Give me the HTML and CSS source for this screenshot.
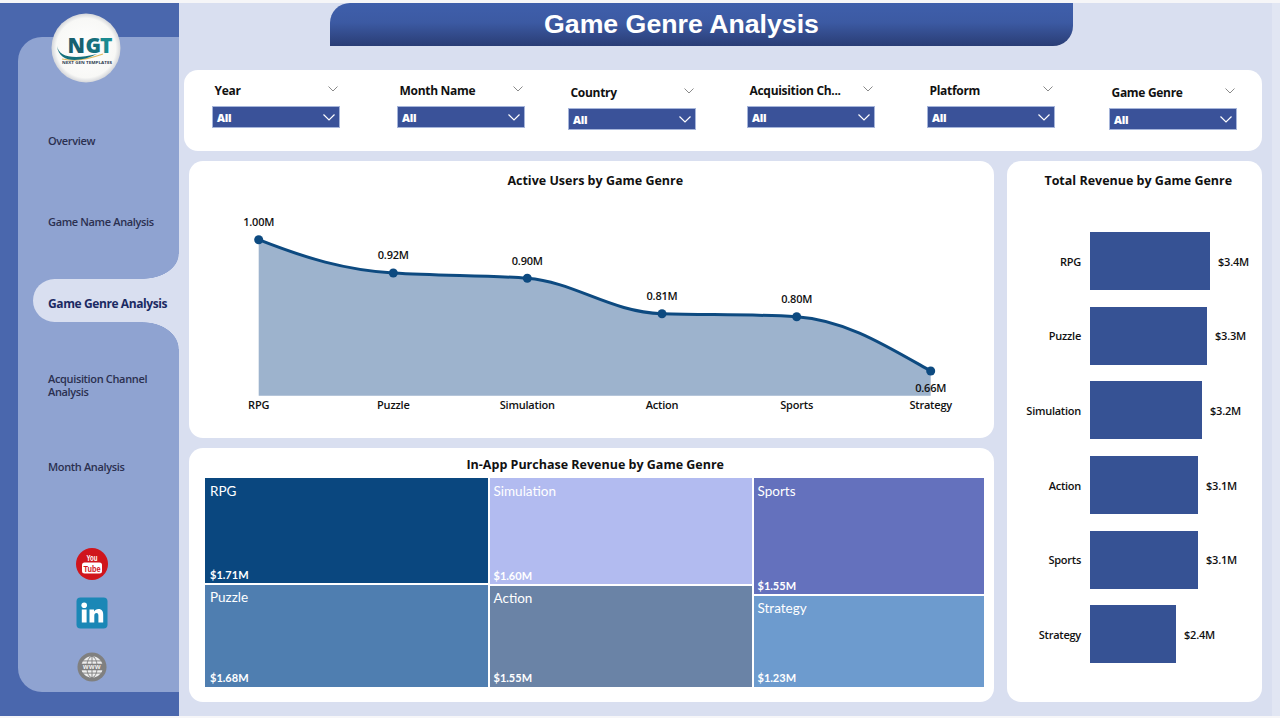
FILE: index.html
```html
<!DOCTYPE html>
<html lang="en">
<head>
<meta charset="utf-8">
<title>Game Genre Analysis</title>
<link rel="stylesheet" href="styles.css">
</head>
<body>
<div class="page">
  <aside class="sidebar">
    <svg class="logo" viewBox="0 0 70 70" width="70" height="70" aria-label="NGT logo">
      <defs>
        <radialGradient id="logoBg" cx="50%" cy="50%" r="50%">
          <stop offset="0" stop-color="#ffffff"/>
          <stop offset="0.86" stop-color="#f8f8f6"/>
          <stop offset="1" stop-color="#d4d6da"/>
        </radialGradient>
      </defs>
      <circle cx="35" cy="35" r="34.5" fill="url(#logoBg)"/>
      <path d="M11 46 C24 49 38 46 52 41" fill="none" stroke="#e2bb5f" stroke-width="1.2"/>
      <path d="M6 33 C8 44 22 47 46 41 C28 50 8 50 6 33Z" fill="#14707c"/>
      <text class="logo-mark" x="16.500" y="40">N</text>
      <text class="logo-mark logo-g" x="34.500" y="40">G</text>
      <text class="logo-mark logo-t" x="49" y="40">T</text>
      <text class="logo-sub" x="36" y="50.500" text-anchor="middle" textLength="50" lengthAdjust="spacingAndGlyphs">NEXT GEN TEMPLATES</text>
    </svg>
    <div class="panel">
      <nav class="nav">
        <a class="nav-item">Overview</a>
        <a class="nav-item raised">Game Name Analysis</a>
        <a class="nav-item active"><span class="curve curve-top"></span><span class="tab"></span><span class="nav-label">Game Genre Analysis</span><span class="curve curve-bottom"></span></a>
        <a class="nav-item">Acquisition Channel<br>Analysis</a>
        <a class="nav-item">Month Analysis</a>
      </nav>
      <div class="social">
        <svg class="icon-yt" viewBox="0 0 32 32" width="32" height="32" aria-label="YouTube">
          <circle cx="16" cy="16" r="16" fill="#d0151c"/>
          <text class="yt-you" x="16" y="13" text-anchor="middle" textLength="11" lengthAdjust="spacingAndGlyphs">You</text>
          <rect x="6" y="14.500" width="20" height="11" rx="2.500" fill="#fff"/>
          <text class="yt-tube" x="16" y="23.500" text-anchor="middle" textLength="17" lengthAdjust="spacingAndGlyphs">Tube</text>
        </svg>
        <svg class="icon-in" viewBox="0 0 32 32" width="32" height="32" aria-label="LinkedIn">
          <rect x="0.500" y="0.500" width="31" height="31" rx="4" fill="#1b87b6"/>
          <circle cx="8.200" cy="8.200" r="2.800" fill="#fff"/>
          <rect x="5.800" y="12.500" width="4.800" height="13" fill="#fff"/>
          <path d="M13.500 12.500h4.500v2c1-1.500 2.500-2.400 4.400-2.400 3.700 0 4.800 2.400 4.800 5.800v7.600h-4.800v-6.900c0-1.700-.5-2.600-1.900-2.600-1.500 0-2.200 1-2.200 2.700v6.800h-4.800z" fill="#fff"/>
        </svg>
        <svg class="icon-web" viewBox="0 0 32 32" width="30" height="30" aria-label="Website">
          <circle cx="16" cy="16" r="15.500" fill="#808080"/>
          <circle cx="16" cy="16" r="11.500" fill="#eeeeee"/>
          <ellipse cx="16" cy="16" rx="5.500" ry="11.500" fill="none" stroke="#808080" stroke-width="1"/>
          <path d="M16 4.500v23M6 9.500h20M6 22.500h20" stroke="#808080" stroke-width="1" fill="none"/>
          <rect x="3" y="12.500" width="26" height="7" fill="#808080"/>
          <text class="web-text" x="16" y="18.500" text-anchor="middle">www</text>
        </svg>
      </div>
    </div>
  </aside>

  <main class="main">
    <header class="banner"><h1 class="banner-title">Game Genre Analysis</h1></header>

    <section class="filters">
      <div class="slicer">
        <div class="slicer-head"><span>Year</span><svg class="chev-small" viewBox="0 0 10 6" width="10" height="6"><path d="M.5.5 5 5 9.500.5"/></svg></div>
        <div class="dropdown"><span>All</span><svg class="chev-white" viewBox="0 0 12 7" width="12" height="7"><path d="M.5.5 6 6 11.500.5"/></svg></div>
      </div>
      <div class="slicer">
        <div class="slicer-head"><span>Month Name</span><svg class="chev-small" viewBox="0 0 10 6" width="10" height="6"><path d="M.5.5 5 5 9.500.5"/></svg></div>
        <div class="dropdown"><span>All</span><svg class="chev-white" viewBox="0 0 12 7" width="12" height="7"><path d="M.5.5 6 6 11.500.5"/></svg></div>
      </div>
      <div class="slicer lowered">
        <div class="slicer-head"><span>Country</span><svg class="chev-small" viewBox="0 0 10 6" width="10" height="6"><path d="M.5.5 5 5 9.500.5"/></svg></div>
        <div class="dropdown"><span>All</span><svg class="chev-white" viewBox="0 0 12 7" width="12" height="7"><path d="M.5.5 6 6 11.500.5"/></svg></div>
      </div>
      <div class="slicer">
        <div class="slicer-head"><span>Acquisition Ch...</span><svg class="chev-small" viewBox="0 0 10 6" width="10" height="6"><path d="M.5.5 5 5 9.500.5"/></svg></div>
        <div class="dropdown"><span>All</span><svg class="chev-white" viewBox="0 0 12 7" width="12" height="7"><path d="M.5.5 6 6 11.500.5"/></svg></div>
      </div>
      <div class="slicer">
        <div class="slicer-head"><span>Platform</span><svg class="chev-small" viewBox="0 0 10 6" width="10" height="6"><path d="M.5.5 5 5 9.500.5"/></svg></div>
        <div class="dropdown"><span>All</span><svg class="chev-white" viewBox="0 0 12 7" width="12" height="7"><path d="M.5.5 6 6 11.500.5"/></svg></div>
      </div>
      <div class="slicer lowered">
        <div class="slicer-head"><span>Game Genre</span><svg class="chev-small" viewBox="0 0 10 6" width="10" height="6"><path d="M.5.5 5 5 9.500.5"/></svg></div>
        <div class="dropdown"><span>All</span><svg class="chev-white" viewBox="0 0 12 7" width="12" height="7"><path d="M.5.5 6 6 11.500.5"/></svg></div>
      </div>
    </section>

    <div class="charts">
      <div class="charts-left">
        <section class="card line-card">
          <h2 class="card-title">Active Users by Game Genre</h2>
          <svg class="line-chart" viewBox="189 190 805 248" width="805" height="248">
            <path class="area" d="M258.700 239.700 C305 258 345 270 393.300 273 C440 276 490 275 527.300 278.300 C575 282 610 312 662 313.700 C710 315 750 314 796.700 316.700 C845 320 885 345 930.700 371 L930.700 395.700 L258.700 395.700Z"/>
            <path class="line" d="M258.700 239.700 C305 258 345 270 393.300 273 C440 276 490 275 527.300 278.300 C575 282 610 312 662 313.700 C710 315 750 314 796.700 316.700 C845 320 885 345 930.700 371"/>
            <circle class="dot" cx="258.700" cy="239.700" r="4.500"/>
            <circle class="dot" cx="393.300" cy="273" r="4.500"/>
            <circle class="dot" cx="527.300" cy="278.300" r="4.500"/>
            <circle class="dot" cx="662" cy="313.700" r="4.500"/>
            <circle class="dot" cx="796.700" cy="316.700" r="4.500"/>
            <circle class="dot" cx="930.700" cy="371" r="4.500"/>
            <text class="chart-label" x="258.700" y="225.500">1.00M</text>
            <text class="chart-label" x="393.300" y="259">0.92M</text>
            <text class="chart-label" x="527.300" y="264.500">0.90M</text>
            <text class="chart-label" x="662" y="300">0.81M</text>
            <text class="chart-label" x="796.700" y="303">0.80M</text>
            <text class="chart-label" x="930.700" y="392">0.66M</text>
            <text class="chart-label" x="258.700" y="409">RPG</text>
            <text class="chart-label" x="393.300" y="409">Puzzle</text>
            <text class="chart-label" x="527.300" y="409">Simulation</text>
            <text class="chart-label" x="662" y="409">Action</text>
            <text class="chart-label" x="796.700" y="409">Sports</text>
            <text class="chart-label" x="930.700" y="409">Strategy</text>
          </svg>
        </section>

        <section class="card tree-card">
          <h2 class="card-title">In-App Purchase Revenue by Game Genre</h2>
          <div class="treemap">
            <div class="tree-col col-a">
              <div class="cell c-rpg h-105"><span class="cell-name">RPG</span><span class="cell-value">$1.71M</span></div>
              <div class="cell c-puzzle"><span class="cell-name">Puzzle</span><span class="cell-value">$1.68M</span></div>
            </div>
            <div class="tree-col col-b">
              <div class="cell c-sim h-106"><span class="cell-name">Simulation</span><span class="cell-value">$1.60M</span></div>
              <div class="cell c-action"><span class="cell-name">Action</span><span class="cell-value">$1.55M</span></div>
            </div>
            <div class="tree-col col-c">
              <div class="cell c-sports h-116"><span class="cell-name">Sports</span><span class="cell-value">$1.55M</span></div>
              <div class="cell c-strategy"><span class="cell-name">Strategy</span><span class="cell-value">$1.23M</span></div>
            </div>
          </div>
        </section>
      </div>

      <section class="card bar-card">
        <h2 class="card-title">Total Revenue by Game Genre</h2>
        <div class="bars">
          <div class="bar-row"><span class="bar-label">RPG</span><div class="bar-track"><div class="bar" style="width:120px"></div><span class="bar-value">$3.4M</span></div></div>
          <div class="bar-row"><span class="bar-label">Puzzle</span><div class="bar-track"><div class="bar" style="width:117px"></div><span class="bar-value">$3.3M</span></div></div>
          <div class="bar-row"><span class="bar-label">Simulation</span><div class="bar-track"><div class="bar" style="width:112px"></div><span class="bar-value">$3.2M</span></div></div>
          <div class="bar-row"><span class="bar-label">Action</span><div class="bar-track"><div class="bar" style="width:108px"></div><span class="bar-value">$3.1M</span></div></div>
          <div class="bar-row"><span class="bar-label">Sports</span><div class="bar-track"><div class="bar" style="width:108px"></div><span class="bar-value">$3.1M</span></div></div>
          <div class="bar-row"><span class="bar-label">Strategy</span><div class="bar-track"><div class="bar" style="width:86px"></div><span class="bar-value">$2.4M</span></div></div>
        </div>
      </section>
    </div>
  </main>
</div>
</body>
</html>
```

FILE: styles.css
```css
* { box-sizing: border-box; }

html, body {
  margin: 0;
  padding: 0;
  height: 100%;
  background: #f6f6f8;
  overflow: hidden;
}

body {
  font-family: "Open Sans", "Liberation Sans", sans-serif;
  color: #111;
}

.page {
  display: flex;
  height: 713px;
  margin-top: 3px;
  background: linear-gradient(to right, #d9dff0 0, #d9dff0 1272px, #e1e6f3 1272px);
}

/* Sidebar */
.sidebar {
  position: relative;
  width: 179px;
  flex: none;
  display: flex;
  padding: 34px 0 24px 18px;
  background: #4a67ad;
}

.logo {
  position: absolute;
  left: 51px;
  top: 10px;
  z-index: 3;
}

.logo-mark {
  font: 800 21px "Open Sans", sans-serif;
  fill: #17606f;
}
.logo-g { fill: #17707c; }
.logo-t { fill: #1a8a90; }
.logo-sub {
  font: 700 3.600px "Open Sans", sans-serif;
  fill: #2c3a50;
}

.panel {
  flex: 1;
  display: flex;
  flex-direction: column;
  background: #8fa3d1;
  border-radius: 24px 0 0 24px;
}

.nav {
  display: flex;
  flex-direction: column;
  padding-top: 63px;
}

.nav-item {
  position: relative;
  height: 81.500px;
  display: flex;
  align-items: center;
  padding-left: 30px;
  font-size: 11px;
  font-weight: 600;
  line-height: 13.500px;
  letter-spacing: -.35px;
  color: #2b3050;
}

.nav-item.raised { padding-bottom: 2px; }

.nav-item.active {
  font-size: 12px;
  font-weight: 700;
  letter-spacing: -.4px;
  color: #1b2a63;
}

.nav-label { position: relative; z-index: 2; }

.tab {
  position: absolute;
  left: 15px;
  right: 0;
  top: 16px;
  height: 43px;
  background: #d9dff0;
  border-radius: 22px 0 0 22px;
}

.curve {
  position: absolute;
  right: 0;
  width: 36px;
  height: 25px;
}
.curve-top {
  top: -9px;
  background: radial-gradient(ellipse 36px 25px at 0 0, transparent 98%, #d9dff0 100%);
}
.curve-bottom {
  top: 59px;
  height: 27px;
  background: radial-gradient(ellipse 36px 27px at 0 100%, transparent 98%, #d9dff0 100%);
}

.social {
  display: flex;
  flex-direction: column;
  align-items: center;
  width: 148px;
  margin-top: 40px;
}
.icon-in { margin-top: 17px; }
.icon-web { margin-top: 23px; }

.yt-you, .yt-tube {
  font: 700 9px "Liberation Sans", sans-serif;
  fill: #fff;
}
.yt-tube { fill: #d0151c; }
.web-text {
  font: 700 7.500px "Liberation Sans", sans-serif;
  fill: #f2f2f2;
  letter-spacing: .5px;
}

/* Main */
.main {
  flex: 1;
  display: flex;
  flex-direction: column;
}

.banner {
  margin-left: 151px;
  width: 743px;
  height: 43px;
  display: flex;
  align-items: center;
  justify-content: center;
  background: linear-gradient(to bottom, #3f5fab 0, #3c5aa3 45%, #2a3d75 100%);
  border-radius: 20px 0 20px 0;
}

.banner-title {
  margin: 0;
  position: relative;
  left: -20px;
  font: 700 26.700px "Liberation Sans", sans-serif;
  color: #fff;
}

.filters {
  display: grid;
  grid-template-columns: 185px 171px 179px 180px 182px 128px;
  align-items: start;
  width: 1078px;
  height: 81px;
  margin: 24px 0 0 5px;
  padding: 11px 0 0 28px;
  background: #fff;
  border-radius: 14px;
}

.slicer { width: 128px; }
.slicer.lowered { margin-top: 2px; }

.slicer-head {
  display: flex;
  align-items: center;
  justify-content: space-between;
  height: 18px;
  margin-bottom: 6.500px;
  padding: 0 2px 0 2.500px;
  font-size: 12px;
  font-weight: 700;
  letter-spacing: -.3px;
  color: #111;
}

.chev-small {
  margin-bottom: 3px;
}
.chev-small path {
  fill: none;
  stroke: #8a8a8a;
  stroke-width: 1;
}

.dropdown {
  display: flex;
  align-items: center;
  justify-content: space-between;
  height: 22px;
  padding: 1px 4px 0 4px;
  background: #3a5299;
  border: 1px solid #a6b5da;
  color: #fff;
  font-size: 11px;
  font-weight: 800;
  letter-spacing: -.3px;
}
.chev-white path {
  fill: none;
  stroke: #fff;
  stroke-width: 1.200;
}

.charts {
  display: flex;
  margin: 10px 0 0 10px;
}

.charts-left {
  display: flex;
  flex-direction: column;
  gap: 10px;
  width: 805px;
}

.card {
  background: #fff;
  border-radius: 14px;
}

.card-title {
  margin: 0;
  height: 18px;
  padding-left: 7.500px;
  font-size: 12.500px;
  line-height: 18px;
  font-weight: 700;
  text-align: center;
  color: #111;
}

.line-card {
  height: 277px;
  padding-top: 11px;
}

.line-chart { display: block; }

.area { fill: #9db3cd; }
.line {
  fill: none;
  stroke: #0d4a80;
  stroke-width: 3;
}
.dot { fill: #0d4a80; }

.chart-label {
  font-size: 11px;
  font-weight: 600;
  letter-spacing: -.2px;
  fill: #111;
  text-anchor: middle;
}

.tree-card {
  height: 254px;
  padding-top: 8px;
}

.treemap {
  display: flex;
  gap: 2px;
  width: 779px;
  height: 209px;
  margin: 4px 0 0 16px;
}

.tree-col {
  display: flex;
  flex-direction: column;
  gap: 2px;
}
.col-a { width: 283px; }
.col-b { width: 262px; }
.col-c { width: 230px; }

.cell {
  flex: 1;
  display: flex;
  flex-direction: column;
  justify-content: space-between;
  padding: 3px 5px 1px;
  color: #fff;
  font-family: "Lato", "Open Sans", sans-serif;
}
.cell + .cell { padding-top: 2px; }
.col-b .cell, .col-c .cell { padding-left: 3.500px; }
.h-105, .h-106, .h-116 { flex: none; padding-bottom: 0; }
.h-105 { height: 105px; }
.h-106 { height: 106px; }
.h-116 { height: 116px; }

.cell-name { font-size: 13.500px; line-height: 20px; }
.cell-value { font-size: 11px; line-height: 16px; font-weight: 700; }

.c-rpg { background: #0a477f; }
.c-puzzle { background: #4f7eb0; }
.c-sim { background: #b2bbf0; }
.c-action { background: #6a83a6; }
.c-sports { background: #6471bd; }
.c-strategy { background: #6d9bce; }

.bar-card {
  width: 255px;
  height: 541px;
  margin-left: 13px;
  padding-top: 11px;
}

.bars {
  display: flex;
  flex-direction: column;
  gap: 16.700px;
  margin-top: 42px;
}

.bar-row {
  display: flex;
  align-items: center;
  height: 58px;
}

.bar-label {
  width: 74px;
  text-align: right;
  font-size: 11px;
  font-weight: 600;
  letter-spacing: -.25px;
  color: #111;
}

.bar-track {
  display: flex;
  align-items: center;
  margin-left: 9px;
}

.bar {
  height: 58px;
  background: #365294;
}

.bar-value {
  margin-left: 8px;
  font-size: 11px;
  font-weight: 600;
  letter-spacing: -.2px;
  color: #111;
}
```
